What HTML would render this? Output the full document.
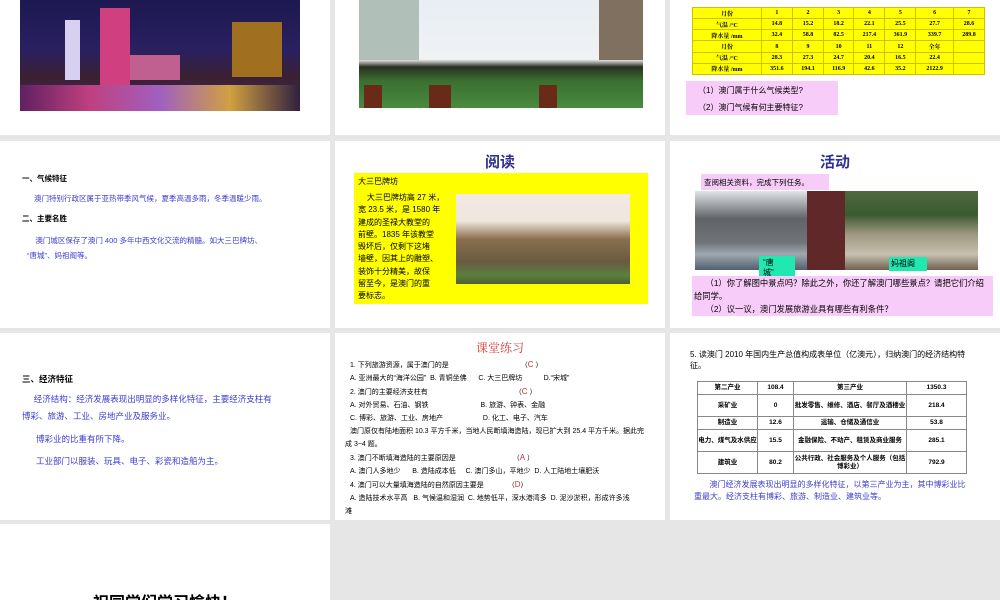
<!DOCTYPE html>
<html><head><meta charset="utf-8"><style>
*{margin:0;padding:0;box-sizing:border-box}
body{width:1000px;height:600px;background:#e6e6e6;position:relative;overflow:hidden;font-family:"Liberation Sans","Noto Sans CJK SC",sans-serif}
.s{position:absolute;background:#fff;overflow:hidden}
.a{position:absolute}
.blue{color:#3c3cd0}
table{border-collapse:collapse}
</style></head><body>
<!-- row1 -->
<div class="s" style="left:0;top:0;width:330px;height:135px">
 <div class="a" style="left:20px;top:0;width:280px;height:111px;overflow:hidden;background:linear-gradient(180deg,#1c1850 0%,#2a2060 45%,#3a2030 70%,#402850 85%,#201830 100%)">
  <div class="a" style="left:45px;top:20px;width:15px;height:60px;background:#d8d0f0"></div>
  <div class="a" style="left:80px;top:8px;width:30px;height:120px;background:#d04080"></div>
  <div class="a" style="left:110px;top:55px;width:50px;height:25px;background:#c06090"></div>
  <div class="a" style="left:212px;top:22px;width:50px;height:55px;background:#a07020"></div>
  <div class="a" style="left:0;top:85px;width:280px;height:26px;background:linear-gradient(90deg,#602060,#c04080,#a060c0,#d0a040,#302040)"></div>
 </div>
</div>
<div class="s" style="left:335px;top:0;width:330px;height:135px">
 <div class="a" style="left:24px;top:0;width:284px;height:108px;overflow:hidden;background:linear-gradient(180deg,#e8eef4 0%,#f0f2f4 55%,#2a3020 62%,#3a7030 75%,#4a8a40 100%)">
  <div class="a" style="left:0;top:0;width:60px;height:60px;background:#b0c0b8"></div>
  <div class="a" style="left:240px;top:0;width:44px;height:60px;background:#807060"></div>
  <div class="a" style="left:5px;top:85px;width:18px;height:23px;background:#6a2a18"></div>
  <div class="a" style="left:70px;top:85px;width:22px;height:23px;background:#6a2a18"></div>
  <div class="a" style="left:180px;top:85px;width:18px;height:23px;background:#6a2a18"></div>
 </div>
</div>
<div class="s" style="left:670px;top:0;width:330px;height:135px;font-family:'Liberation Serif','Noto Serif CJK SC',serif">
 <table class="a" style="left:22px;top:7px;width:293px;height:68px;background:#ffff00;font-size:6px;font-weight:bold;text-align:center" border="1" bordercolor="#d0c000">
  <tr><td>月份</td><td>1</td><td>2</td><td>3</td><td>4</td><td>5</td><td>6</td><td>7</td></tr>
  <tr><td>气温 /°C</td><td>14.8</td><td>15.2</td><td>18.2</td><td>22.1</td><td>25.5</td><td>27.7</td><td>28.6</td></tr>
  <tr><td>降水量 /mm</td><td>32.4</td><td>58.8</td><td>82.5</td><td>217.4</td><td>361.9</td><td>339.7</td><td>289.8</td></tr>
  <tr><td>月份</td><td>8</td><td>9</td><td>10</td><td>11</td><td>12</td><td>全年</td><td></td></tr>
  <tr><td>气温 /°C</td><td>28.3</td><td>27.3</td><td>24.7</td><td>20.4</td><td>16.5</td><td>22.4</td><td></td></tr>
  <tr><td>降水量 /mm</td><td>351.6</td><td>194.1</td><td>116.9</td><td>42.6</td><td>35.2</td><td>2122.9</td><td></td></tr>
 </table>
 <div class="a" style="left:16px;top:81px;width:152px;height:34px;background:#f8ccf8;font-size:8px;padding:1px 0 0 12px;line-height:17px;font-family:'Liberation Sans','Noto Sans CJK SC',sans-serif">（1）澳门属于什么气候类型?<br>（2）澳门气候有何主要特征?</div>
</div>
<!-- row2 -->
<div class="s" style="left:0;top:141px;width:330px;height:187px;font-size:7.5px">
 <div class="a" style="left:22px;top:32px;font-weight:bold">一、气候特征</div>
 <div class="a blue" style="left:34px;top:52px">澳门特别行政区属于亚热带季风气候，夏季高温多雨，冬季温暖少雨。</div>
 <div class="a" style="left:22px;top:72px;font-weight:bold">二、主要名胜</div>
 <div class="a blue" style="left:27px;top:92px;width:270px;line-height:15px">&nbsp;&nbsp;&nbsp;&nbsp;澳门城区保存了澳门 400 多年中西文化交流的精髓。如大三巴牌坊、<br>“唐城”、妈祖阁等。</div>
</div>
<div class="s" style="left:335px;top:141px;width:330px;height:187px">
 <div class="a" style="left:0;width:330px;top:10px;text-align:center;font-size:15px;font-weight:bold;color:#303090">阅读</div>
 <div class="a" style="left:19px;top:32px;width:294px;height:131px;background:#ffff00;font-size:8px;line-height:12.3px">
  <div class="a" style="left:4px;top:3px">大三巴牌坊</div>
  <div class="a" style="left:4px;top:19px;white-space:nowrap">&nbsp;&nbsp;&nbsp;&nbsp;大三巴牌坊高 27 米，<br>宽 23.5 米，是 1580 年<br>建成的圣禄大教堂的<br>前壁。1835 年该教堂<br>毁坏后，仅剩下这堵<br>墙壁，因其上的雕塑、<br>装饰十分精美，故保<br>留至今，是澳门的重<br>要标志。</div>
  <div class="a" style="left:102px;top:21px;width:174px;height:90px;background:linear-gradient(180deg,#f2ebe4 0%,#efe6dc 30%,#8a7050 50%,#6a5a40 75%,#5a8040 90%,#506030 100%)"></div>
 </div>
</div>
<div class="s" style="left:670px;top:141px;width:330px;height:187px">
 <div class="a" style="left:0;width:330px;top:10px;text-align:center;font-size:15px;font-weight:bold;color:#303090">活动</div>
 <div class="a" style="left:31px;top:33px;width:128px;height:16px;background:#f8ccf8;font-size:7.5px;padding:3px 0 0 3px">查阅相关资料，完成下列任务。</div>
 <div class="a" style="left:25px;top:50px;width:112px;height:79px;background:linear-gradient(180deg,#e0e4e8 0%,#606468 35%,#707478 65%,#a0a8b0 80%,#506070 100%)"></div>
 <div class="a" style="left:137px;top:50px;width:38px;height:79px;background:#602828"></div>
 <div class="a" style="left:175px;top:50px;width:133px;height:79px;background:linear-gradient(180deg,#506840 0%,#3a5a30 30%,#a09880 55%,#c8c0b0 80%,#706050 100%)"></div>
 <div class="a" style="left:89px;top:115px;width:36px;height:24px;background:#20e8b0;font-size:8px;line-height:10px;padding:2px 4px">“唐<br>城”</div>
 <div class="a" style="left:219px;top:116px;width:38px;height:14px;background:#20e8b0;font-size:8px;padding:1px 2px">妈祖阁</div>
 <div class="a" style="left:22px;top:135px;width:301px;height:40px;background:#f8ccf8;font-size:8.3px;line-height:13px;padding:1px 2px">&nbsp;&nbsp;&nbsp;&nbsp;&nbsp;（1）你了解图中景点吗？除此之外，你还了解澳门哪些景点？请把它们介绍给同学。<br>&nbsp;&nbsp;&nbsp;&nbsp;&nbsp;（2）议一议，澳门发展旅游业具有哪些有利条件？</div>
</div>
<!-- row3 -->
<div class="s" style="left:0;top:333px;width:330px;height:187px;font-size:8.5px">
 <div class="a" style="left:22px;top:40px;font-weight:bold">三、经济特征</div>
 <div class="a blue" style="left:22px;top:58px;width:280px;line-height:17px">&nbsp;&nbsp;&nbsp;&nbsp;&nbsp;经济结构：经济发展表现出明显的多样化特征，主要经济支柱有<br>博彩、旅游、工业、房地产业及服务业。</div>
 <div class="a blue" style="left:36px;top:100px">博彩业的比重有所下降。</div>
 <div class="a blue" style="left:36px;top:122px">工业部门以服装、玩具、电子、彩瓷和造船为主。</div>
</div>
<div class="s" style="left:335px;top:333px;width:330px;height:187px;font-size:7px;line-height:13px">
 <div class="a" style="left:0;width:330px;top:9px;text-align:center;font-size:12px;color:#d04040;font-family:'Liberation Serif','Noto Serif CJK SC',serif">课堂练习</div>
 <div class="a" style="left:15px;top:25px;width:315px;white-space:nowrap">
  <div>1. 下列旅游资源，属于澳门的是 <span style="margin-left:70px">（<span style="color:#d03030;font-size:8px">C</span> ）</span></div>
  <div>A. 亚洲最大的“海洋公园” &nbsp;B. 青铜坐佛 &nbsp;&nbsp;&nbsp;&nbsp;&nbsp;C. 大三巴牌坊 &nbsp;&nbsp;&nbsp;&nbsp;&nbsp;&nbsp;&nbsp;&nbsp;&nbsp;&nbsp;D.“宋城”</div>
  <div>2. 澳门的主要经济支柱有 <span style="margin-left:85px">（<span style="color:#d03030;font-size:8px">C</span> ）</span></div>
  <div>A. 对外贸易、石油、钢铁 <span style="margin-left:50px">B. 旅游、钟表、金融</span></div>
  <div>C. 博彩、旅游、工业、房地产 <span style="margin-left:38px">D. 化工、电子、汽车</span></div>
  <div>澳门原仅有陆地面积 10.3 平方千米，当地人民断填海造陆，现已扩大到 25.4 平方千米。据此完</div>
  <div style="margin-left:-5px">成 3~4 题。</div>
  <div>3. 澳门不断填海造陆的主要原因是 <span style="margin-left:55px">（<span style="color:#d03030;font-size:8px">A</span> ）</span></div>
  <div>A. 澳门人多地少 &nbsp;&nbsp;&nbsp;&nbsp;&nbsp;B. 造陆成本低 &nbsp;&nbsp;&nbsp;&nbsp;C. 澳门多山，平地少 &nbsp;D. 人工陆地土壤肥沃</div>
  <div>4. 澳门可以大量填海造陆的自然原因主要是 <span style="margin-left:22px">（<span style="color:#d03030;font-size:8px">D</span>）</span></div>
  <div>A. 造陆技术水平高 &nbsp;&nbsp;B. 气候温和湿润 &nbsp;C. 地势低平，深水港湾多 &nbsp;D. 泥沙淤积，形成许多浅</div>
  <div style="margin-left:-5px">滩</div>
 </div>
</div>
<div class="s" style="left:670px;top:333px;width:330px;height:187px;font-size:8px">
 <div class="a" style="left:20px;top:16px;width:280px;line-height:11px">5. 读澳门 2010 年国内生产总值构成表单位（亿澳元），归纳澳门的经济结构特征。</div>
 <table class="a" style="left:27px;top:48px;width:270px;font-size:6.5px;font-weight:bold;text-align:center;line-height:8px" border="1" bordercolor="#888">
  <tr style="height:13px"><td style="width:60px">第二产业</td><td style="width:36px">108.4</td><td style="width:113px">第三产业</td><td>1350.3</td></tr>
  <tr style="height:22px"><td>采矿业</td><td>0</td><td>批发零售、维修、酒店、餐厅及酒楼业</td><td>218.4</td></tr>
  <tr style="height:13px"><td>制造业</td><td>12.6</td><td>运输、仓储及通信业</td><td>53.8</td></tr>
  <tr style="height:22px"><td>电力、煤气及水供应</td><td>15.5</td><td>金融保险、不动产、租赁及商业服务</td><td>285.1</td></tr>
  <tr style="height:22px"><td>建筑业</td><td>80.2</td><td>公共行政、社会服务及个人服务（包括博彩业）</td><td>792.9</td></tr>
 </table>
 <div class="a blue" style="left:24px;top:146px;width:285px;line-height:12px">&nbsp;&nbsp;&nbsp;&nbsp;&nbsp;&nbsp;&nbsp;澳门经济发展表现出明显的多样化特征，以第三产业为主，其中博彩业比<br>重最大。经济支柱有博彩、旅游、制造业、建筑业等。</div>
</div>
<!-- row4 -->
<div class="s" style="left:0;top:524px;width:330px;height:76px">
 <div class="a" style="left:0;width:330px;top:65px;text-align:center;font-size:16px;font-weight:bold">祝同学们学习愉快！</div>
</div>
</body></html>
